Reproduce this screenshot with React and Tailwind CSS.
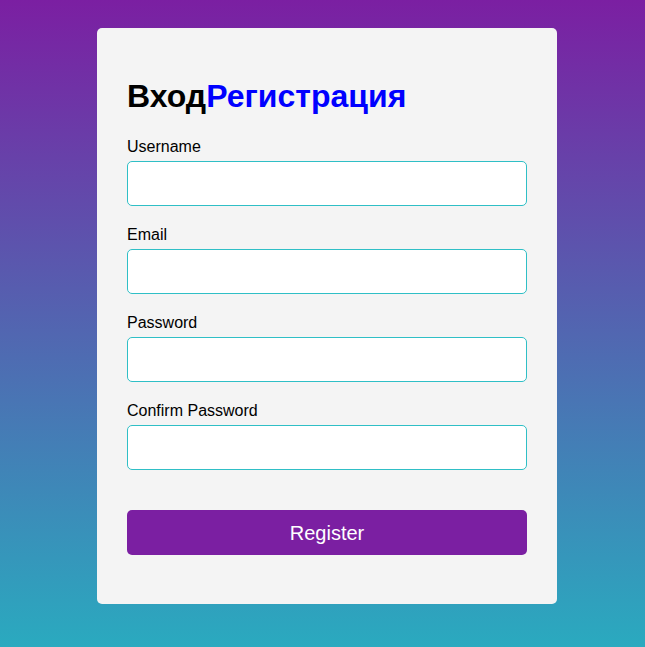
export default function App() {
  const fields = ["Username", "Email", "Password", "Confirm Password"];
  return (
    <div
      className="min-h-[647px] w-full flex justify-center pt-[28px] pl-[9px] bg-[linear-gradient(to_bottom,#7b1fa2,#2aaabf)]"
      style={{ fontFamily: '"Liberation Sans", Arial, sans-serif' }}
    >
      <div className="w-[460px] h-[576px] bg-[#f4f4f4] rounded-[5px] px-[30px] pt-[50px] pb-[49px]">
        <h2 className="text-[32px] leading-[37px] font-bold text-black mb-[23px]">
          Вход<span className="text-[#0000ff]">Регистрация</span>
        </h2>
        {fields.map((f, i) => (
          <div key={f} className={i < fields.length - 1 ? "mb-[20px]" : ""}>
            <label className="block text-[16px] leading-[18px] text-black mb-[5px]">{f}</label>
            <input
              type={f.includes("Password") ? "password" : "text"}
              className="block w-full h-[45px] bg-white border border-[#2fbfc6] rounded-[5px] px-2 outline-none"
            />
          </div>
        ))}
        <button className="mt-[40px] w-full h-[45px] bg-[#7b1fa2] text-white text-[20px] rounded-[5px]">
          Register
        </button>
      </div>
    </div>
  );
}
